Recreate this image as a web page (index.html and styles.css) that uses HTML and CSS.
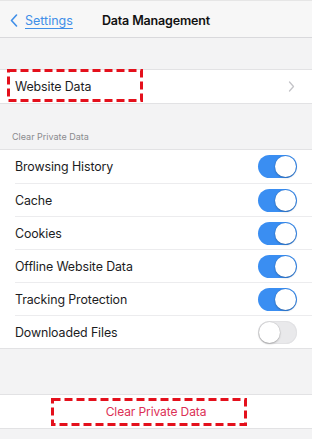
FILE: index.html
```html
<!DOCTYPE html>
<html>
<head>
<meta charset="utf-8">
<link rel="stylesheet" href="styles.css">
</head>
<body>
<div class="screen">
  <header class="nav">
    <a class="back">
      <svg class="back-chev" width="8" height="13" viewBox="0 0 8 13"><path d="M6.5 1 L1.5 6.5 L6.5 12" fill="none" stroke="#3f8ee8" stroke-width="1.6" stroke-linecap="round" stroke-linejoin="round"/></svg>
      <span class="back-label">Settings</span>
    </a>
    <div class="title">Data Management</div>
    <div></div>
  </header>

  <div class="gap-top"></div>

  <div class="group">
    <div class="row link-row">
      <span class="label">Website Data</span>
      <svg class="chev" width="7" height="11" viewBox="0 0 7 11"><path d="M1.5 1 L5.5 5.5 L1.5 10" fill="none" stroke="#c4c4c8" stroke-width="1.3" stroke-linecap="round" stroke-linejoin="round"/></svg>
      <svg class="mark mark-website" width="136" height="33" viewBox="0 0 136 33"><rect x="1.5" y="1.5" width="133" height="30" fill="none" stroke="#e4101c" stroke-width="3" stroke-dasharray="8 4"/></svg>
    </div>
  </div>

  <div class="section-header">Clear Private Data</div>

  <div class="group">
    <div class="row"><span class="label">Browsing History</span><span class="toggle on"></span></div>
    <div class="row"><span class="label">Cache</span><span class="toggle on"></span></div>
    <div class="row"><span class="label">Cookies</span><span class="toggle on"></span></div>
    <div class="row"><span class="label">Offline Website Data</span><span class="toggle on"></span></div>
    <div class="row"><span class="label">Tracking Protection</span><span class="toggle on"></span></div>
    <div class="row"><span class="label">Downloaded Files</span><span class="toggle"></span></div>
  </div>

  <div class="gap-mid"></div>

  <div class="group">
    <div class="row button-row">
      <span class="danger">Clear Private Data</span>
      <svg class="mark mark-clear" width="196" height="28" viewBox="0 0 196 28"><rect x="1.5" y="1.5" width="193" height="25" fill="none" stroke="#e4101c" stroke-width="3" stroke-dasharray="8 4"/></svg>
    </div>
  </div>
</div>
</body>
</html>
```

FILE: styles.css
```css
* { box-sizing: border-box; }
html, body {
  margin: 0;
  padding: 0;
  background: #f3f3f4;
}
body {
  font-family: Inter, "Noto Sans", "Liberation Sans", sans-serif;
  color: #1c1c1e;
  width: 312px;
  height: 439px;
  overflow: hidden;
}
.screen {
  display: flex;
  flex-direction: column;
}
.nav {
  height: 38px;
  padding-top: 3px;
  border-top: 1px solid #e6e6e6;
  border-bottom: 1px solid #d9d9dc;
  background: #f7f7f7;
  display: grid;
  grid-template-columns: 1fr auto 1fr;
  align-items: center;
}
.back {
  display: flex;
  align-items: center;
  gap: 7px;
  padding-left: 10px;
  color: #3f8ee8;
  font-size: 12.5px;
}
.back-label {
  text-decoration: underline;
  text-underline-offset: 3px;
  text-decoration-thickness: 1px;
}
.title {
  font-size: 12.5px;
  font-weight: 600;
  color: #111;
  letter-spacing: -0.15px;
}
.gap-top { height: 31px; }
.gap-mid { height: 45px; }
.group {
  background: #fff;
  border-top: 1px solid #e2e2e4;
  border-bottom: 1px solid #e2e2e4;
}
.row {
  position: relative;
  height: 33px;
  margin-left: 15px;
  padding-right: 15px;
  display: flex;
  align-items: center;
  justify-content: space-between;
  border-top: 1px solid #ececee;
}
.row:first-child { border-top: none; height: 33px; }
.label {
  font-size: 12.4px;
  color: #1c1c1e;
  letter-spacing: -0.1px;
}
.chev { margin-right: 2px; }
.mark {
  position: absolute;
  pointer-events: none;
}
.mark-website { left: -8px; top: -1px; }
.section-header {
  font-size: 9px;
  color: #8a8a8e;
  padding: 27px 12px 6px;
  height: 45px;
}
.toggle {
  position: relative;
  width: 39px;
  height: 23px;
  border-radius: 12px;
  background: #e9e9eb;
  box-shadow: inset 0 0 0 1px #e2e2e4;
}
.toggle::after {
  content: "";
  position: absolute;
  top: 1px;
  left: 1px;
  width: 21px;
  height: 21px;
  border-radius: 50%;
  background: #fff;
  box-shadow: 0 1px 2px rgba(0,0,0,0.25), 0 0 0 0.5px rgba(0,0,0,0.08);
}
.toggle.on {
  background: #3a8ef2;
  box-shadow: none;
}
.toggle.on::after { left: 17px; }
.button-row {
  justify-content: center;
  margin-left: 0;
  padding-right: 0;
}
.danger {
  color: #dc2f55;
  font-size: 12px;
  letter-spacing: -0.1px;
}
.mark-clear { left: 51px; top: 3px; }
```
